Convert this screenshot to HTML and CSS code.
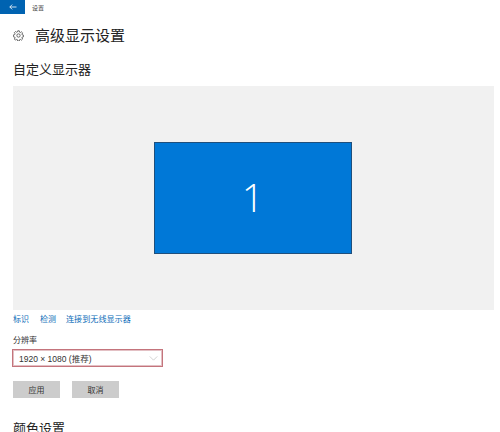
FILE: index.html
```html
<!DOCTYPE html>
<html lang="zh-CN">
<head>
  <meta charset="UTF-8" />
  <title>高级显示设置</title>
  <link rel="stylesheet" href="styles.css">
</head>
<body>

  <!-- Top bar -->
  <div class="topbar">
    <div class="back-btn">
      <svg class="back-icon" viewBox="0 0 8 6"><path d="M7.500 3H.8M3.200.6.8 3l2.400 2.400" /></svg>
    </div>
    <span class="topbar-title">设置</span>
  </div>

  <div class="page">
    <div class="page-title">
      <svg class="gear" viewBox="0 0 20 20">
        <circle cx="10" cy="10" r="3" />
        <path d="M8.600 1.500h2.800l.5 2.400 1.500.7 2.100-1.300 2 2-1.300 2.100.6 1.500 2.400.6v2.800l-2.400.5-.6 1.500 1.300 2.100-2 2-2.100-1.300-1.500.6-.5 2.400H8.600l-.5-2.400-1.500-.6-2.100 1.300-2-2 1.300-2.100-.7-1.500-2.400-.5V9l2.400-.6.7-1.500-1.300-2.100 2-2 2.100 1.300 1.500-.7z" />
      </svg>
      <h1>高级显示设置</h1>
    </div>

    <h2 class="section-title">自定义显示器</h2>

    <div class="preview">
      <div class="monitor">1</div>
    </div>

    <div class="links">
      <a href="#">标识</a>
      <a href="#">检测</a>
      <a href="#">连接到无线显示器</a>
    </div>

    <div class="field-label">分辨率</div>
    <div class="select">
      <span>1920 × 1080 (推荐)</span>
      <svg class="chevron" viewBox="0 0 10 6"><path d="M.5.5 5 5 9.500.5" /></svg>
    </div>

    <div class="buttons">
      <button class="btn">应用</button>
      <button class="btn">取消</button>
    </div>

    <h2 class="section-title color-title">颜色设置</h2>
  </div>

</body>
</html>
```

FILE: styles.css
```css
html, body {
  height: 432px;
  overflow: hidden;
}
body {
  margin: 0;
  background: #fff;
  color: #222;
  font-family: "Noto Sans CJK SC", "Liberation Sans", sans-serif;
}
.topbar {
  display: flex;
  align-items: center;
  height: 14px;
}
.back-btn {
  display: flex;
  align-items: center;
  justify-content: center;
  width: 25px;
  height: 14px;
  background: #0063b1;
}
.back-icon {
  width: 8px;
  height: 6px;
  fill: none;
  stroke: #fff;
  stroke-width: 0.8;
}
.topbar-title {
  margin-left: 7px;
  font-size: 6px;
  color: #444;
}
.page {
  padding: 0 6px 0 13px;
}
.page-title {
  display: flex;
  align-items: center;
  height: 20px;
  margin-top: 11px;
}
.gear {
  width: 11px;
  height: 11px;
  margin-right: 12px;
  fill: none;
  stroke: #555;
  stroke-width: 1.6;
}
h1 {
  margin: 0 0 0 -1px;
  font-size: 15px;
  font-weight: 400;
  line-height: 20px;
}
.section-title {
  margin: 15px 0 0;
  font-size: 13px;
  font-weight: 400;
  line-height: 18px;
  height: 18px;
}
.preview {
  display: flex;
  justify-content: center;
  align-items: center;
  height: 224px;
  margin-top: 8px;
  background: #f1f1f1;
}
.monitor {
  display: flex;
  align-items: center;
  justify-content: center;
  box-sizing: border-box;
  width: 198px;
  height: 112px;
  margin-right: 1px;
  padding-bottom: 3px;
  border: 1px solid #1f4f7c;
  background: #0078d7;
  color: #fff;
  font-family: "Open Sans", "Liberation Sans", sans-serif;
  font-size: 39px;
  font-weight: 300;
}
.links {
  display: flex;
  gap: 11px;
  margin-top: 3px;
  font-size: 8px;
  line-height: 11px;
}
.links a {
  color: #0a6cb8;
  text-decoration: none;
}
.links a:last-child {
  margin-left: -1px;
  font-size: 8.1px;
}
.field-label {
  margin-top: 10px;
  font-size: 8px;
  line-height: 11px;
  color: #333;
}
.select {
  display: flex;
  align-items: center;
  justify-content: space-between;
  box-sizing: border-box;
  width: 151px;
  height: 18px;
  margin: 4px 0 0 -1px;
  padding: 0 4px 0 6px;
  border: 1px solid #c4747c;
  outline: 1px solid #e3c0c4;
  outline-offset: -2px;
  font-family: "Liberation Sans", "Noto Sans CJK SC", sans-serif;
  font-size: 8.5px;
  color: #333;
}
.chevron {
  width: 9px;
  height: 5px;
  fill: none;
  stroke: #bbb;
  stroke-width: 0.8;
}
.buttons {
  display: flex;
  gap: 12px;
  margin-top: 14px;
}
.btn {
  width: 47px;
  height: 17px;
  padding: 0;
  border: none;
  background: #ccc;
  color: #333;
  font-family: inherit;
  font-size: 8px;
}
.color-title {
  margin-top: 21px;
}
```
